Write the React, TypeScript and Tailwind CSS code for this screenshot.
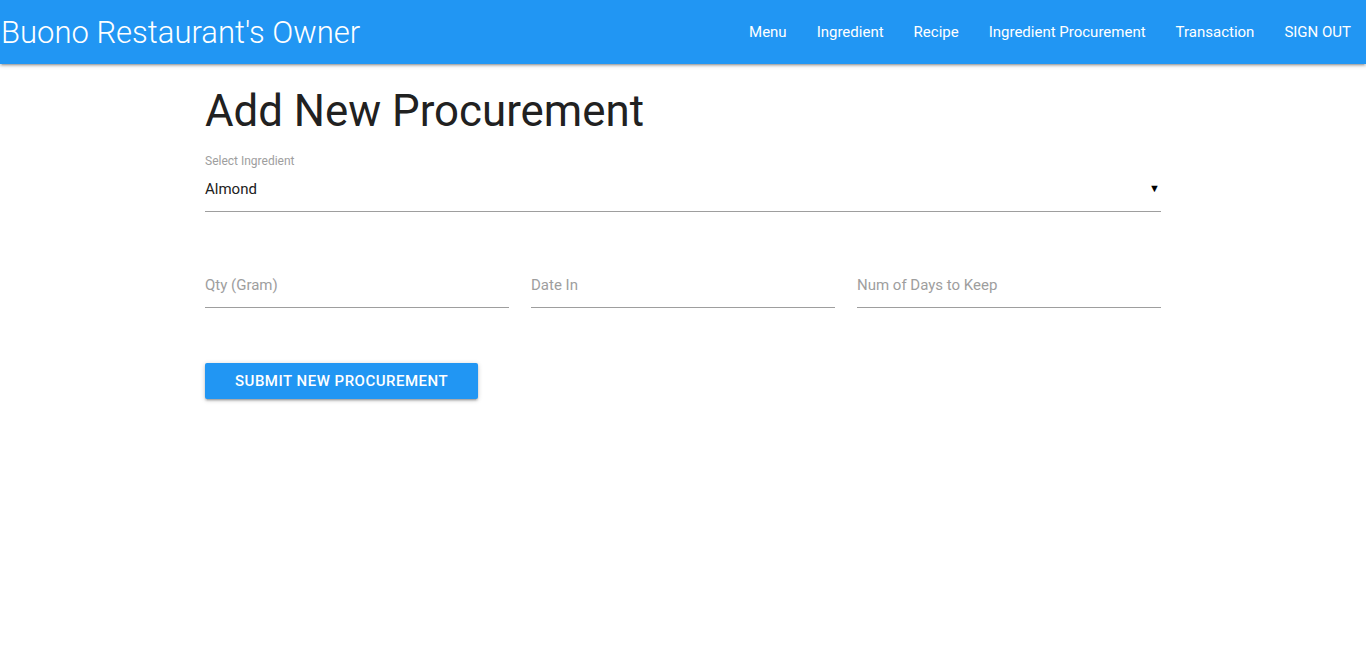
import React from 'react';

const links = ['Menu', 'Ingredient', 'Recipe', 'Ingredient Procurement', 'Transaction', 'SIGN OUT'];

export default function App() {
    return (
        <div className="min-h-screen bg-white" style={{ fontFamily: 'Roboto, "Liberation Sans", sans-serif' }}>
            <nav className="h-16 bg-[#2196f3] flex items-center justify-between shadow-[0_2px_2px_0_rgba(0,0,0,0.14),0_3px_1px_-2px_rgba(0,0,0,0.12),0_1px_5px_0_rgba(0,0,0,0.2)]">
                <a className="text-white text-[31px] font-light leading-none pl-[1px]">Buono Restaurant's Owner</a>
                <ul className="flex items-center h-full">
                    {links.map((l) => (
                        <li key={l} className="h-full">
                            <a className="h-full flex items-center px-[15px] text-white text-[15px] font-normal">{l}</a>
                        </li>
                    ))}
                </ul>
            </nav>

            <main className="w-[956px] mx-auto">
                <h3 className="text-[43.8px] leading-[1.1] text-[#212121] font-normal mt-[23px]">Add New Procurement</h3>

                <div className="mt-[20px]">
                    <label className="block text-[12px] text-[#9e9e9e] leading-none">Select Ingredient</label>
                    <div className="flex items-center justify-between h-[44px] border-b border-[#9e9e9e] mt-[1px] pb-[1px]">
                        <span className="text-[15px] text-[#212121]">Almond</span>
                        <span className="text-[11px] text-black pr-[1px]">▼</span>
                    </div>
                </div>

                <div className="grid grid-cols-3 gap-[22px] mt-[52px]">
                    {['Qty (Gram)', 'Date In', 'Num of Days to Keep'].map((p) => (
                        <div key={p} className="h-[44px] border-b border-[#9e9e9e] flex items-center pb-[1px]">
                            <span className="text-[15px] text-[#9e9e9e]">{p}</span>
                        </div>
                    ))}
                </div>

                <button className="mt-[55px] h-[36px] px-[30px] bg-[#2196f3] text-white text-[15px] font-medium uppercase tracking-[0.5px] rounded-[2px] shadow-[0_2px_2px_0_rgba(0,0,0,0.14),0_3px_1px_-2px_rgba(0,0,0,0.12),0_1px_5px_0_rgba(0,0,0,0.2)]">
                    Submit New Procurement
                </button>
            </main>
        </div>
    );
}
